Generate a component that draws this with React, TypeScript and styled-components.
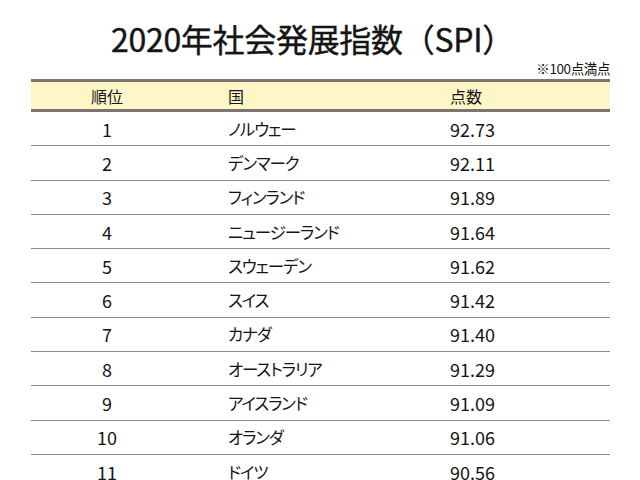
import React from "react";
import styled, { createGlobalStyle } from "styled-components";

const Global = createGlobalStyle`
  html, body { margin: 0; padding: 0; background: #fff; }
  body { font-family: "Noto Sans CJK JP", "Noto Sans", sans-serif; color: #151515; }
`;

const Page = styled.div`
  width: 640px;
  height: 480px;
  overflow: hidden;
  display: flex;
  flex-direction: column;
  box-sizing: border-box;
  padding: 0 30px 0 31px;
`;

const Title = styled.h1`
  margin: 18px 0 0 0;
  font-size: 32px;
  line-height: 40px;
  font-weight: 400;
  text-align: center;
  padding-right: 16px;
  letter-spacing: -0.3px;
  -webkit-text-stroke: 0.4px #151515;
`;

const Note = styled.div`
  text-align: right;
  font-size: 13.5px;
  line-height: 16px;
  margin-top: 2px;
  font-feature-settings: "palt";
  letter-spacing: -0.4px;
`;

const Table = styled.div`
  margin-top: 3px;
  display: flex;
  flex-direction: column;
`;

const Row = styled.div<{ $head?: boolean }>`
  display: grid;
  grid-template-columns: 152px 222px 1fr;
  align-items: center;
  box-sizing: border-box;
  height: ${(p) => (p.$head ? "33px" : "34.3px")};
  background: ${(p) => (p.$head ? "#fef6c6" : "#fff")};
  border-top: ${(p) => (p.$head ? "3px solid #7b7670" : "none")};
  border-bottom: ${(p) => (p.$head ? "3px solid #7b7670" : "1.5px solid #8c8c8c")};
  font-size: ${(p) => (p.$head ? "16px" : "18px")};
`;

const Rank = styled.div`
  text-align: center;
`;

const Cell = styled.div<{ $kana?: boolean }>`
  padding-left: 45px;
  white-space: nowrap;
  ${(p) => (p.$kana ? `font-feature-settings: "palt"; letter-spacing: -1.1px; font-size: 16.5px;` : "")}
`;

const data: [string, string][] = [
  ["ノルウェー", "92.73"],
  ["デンマーク", "92.11"],
  ["フィンランド", "91.89"],
  ["ニュージーランド", "91.64"],
  ["スウェーデン", "91.62"],
  ["スイス", "91.42"],
  ["カナダ", "91.40"],
  ["オーストラリア", "91.29"],
  ["アイスランド", "91.09"],
  ["オランダ", "91.06"],
  ["ドイツ", "90.56"],
];

export default function App() {
  return (
    <>
      <Global />
      <Page>
        <Title>2020年社会発展指数（SPI）</Title>
        <Note>※100点満点</Note>
        <Table>
          <Row $head>
            <Rank>順位</Rank>
            <Cell>国</Cell>
            <Cell>点数</Cell>
          </Row>
          {data.map(([c, s], i) => (
            <Row key={c}>
              <Rank>{i + 1}</Rank>
              <Cell $kana>{c}</Cell>
              <Cell>{s}</Cell>
            </Row>
          ))}
        </Table>
      </Page>
    </>
  );
}
